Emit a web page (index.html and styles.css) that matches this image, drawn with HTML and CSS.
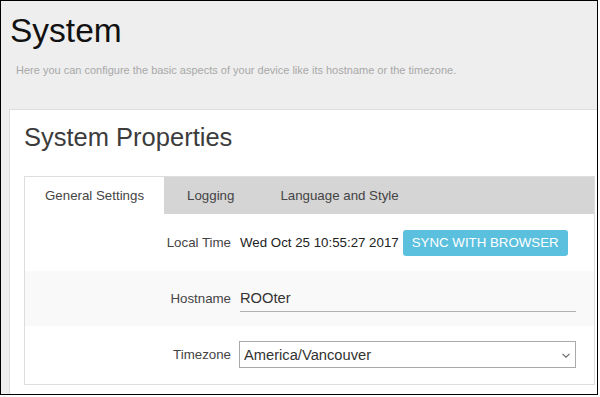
FILE: index.html
```html
<!DOCTYPE html>
<html>
<head>
<meta charset="utf-8">
<link rel="stylesheet" href="styles.css">
</head>
<body>
<div class="frame">
  <header class="page-head">
    <h1 class="page-title">System</h1>
    <p class="page-desc">Here you can configure the basic aspects of your device like its hostname or the timezone.</p>
  </header>
  <section class="card">
    <h2 class="card-title">System Properties</h2>
    <div class="tabbox">
      <div class="tabbar">
        <div class="tab active">General Settings</div>
        <div class="tab">Logging</div>
        <div class="tab">Language and Style</div>
      </div>
      <div class="rows">
        <div class="row">
          <label class="row-label">Local Time</label>
          <div class="row-value">
            <span class="time">Wed Oct 25 10:55:27 2017</span>
            <button class="btn-sync">SYNC WITH BROWSER</button>
          </div>
        </div>
        <div class="row striped">
          <label class="row-label">Hostname</label>
          <div class="row-value">
            <input class="text-input" type="text" value="ROOter">
          </div>
        </div>
        <div class="row last">
          <label class="row-label">Timezone</label>
          <div class="row-value">
            <div class="select-wrap">
              <select class="select"><option>America/Vancouver</option></select>
              <svg class="chev" width="8" height="5" viewBox="0 0 8 5"><path d="M0.5 0.8 L4 4.2 L7.5 0.8" fill="none" stroke="#666" stroke-width="1.1"/></svg>
            </div>
          </div>
        </div>
      </div>
    </div>
  </section>
</div>
</body>
</html>
```

FILE: styles.css
```css
* { box-sizing: border-box; }
html, body { margin: 0; padding: 0; background: #fff; }
body { font-family: "Liberation Sans", Arial, sans-serif; }

.frame {
  width: 598px;
  height: 395px;
  border: 1px solid #000;
  background: #eeeeee;
  overflow: hidden;
}

.page-head { padding: 10px 0 0 9px; }
.page-title {
  margin: 0;
  font-size: 33.5px;
  line-height: 40px;
  font-weight: normal;
  color: #111;
}
.page-desc {
  margin: 13px 0 0 6px;
  font-size: 11px;
  line-height: 13px;
  color: #a8a8a8;
}

.card {
  margin: 32px 0 0 8px;
  width: 601px;
  border: 1px solid #dddddd;
  background: #fff;
  padding: 12px 14px 20px 14px;
}
.card-title {
  margin: 0 0 24px 0;
  font-size: 25.5px;
  line-height: 30px;
  font-weight: normal;
  color: #3c3c3c;
}

.tabbox {
  border: 1px solid #dddddd;
}
.tabbar {
  display: flex;
  background: #d5d5d5;
  height: 37px;
}
.tab {
  padding: 0 23px;
  line-height: 37px;
  font-size: 13.3px;
  color: #444;
}
.tab.active {
  background: #fff;
  padding: 0 20px;
}

.row {
  display: grid;
  grid-template-columns: 215px 1fr;
  align-items: center;
  padding: 15px 0;
  min-height: 57px;
}
.row.striped {
  background: #f9f9f9;
  padding: 14px 0;
  min-height: 55px;
}
.row.last {
  padding: 15px 0 16px;
  min-height: 58px;
}
.row-label {
  text-align: right;
  padding-right: 9px;
  font-size: 13.3px;
  color: #444;
}
.row-value {
  display: flex;
  align-items: center;
}
.time {
  font-size: 13.3px;
  color: #222;
}
.btn-sync {
  margin-left: 4px;
  height: 26px;
  padding: 0 9px;
  border: none;
  border-radius: 3px;
  background: #5bc0de;
  color: #fff;
  font-family: "Liberation Sans", Arial, sans-serif;
  font-size: 13.3px;
  line-height: 26px;
}
.text-input {
  width: 336px;
  height: 26px;
  border: 0;
  border-bottom: 1px solid #b0b0b0;
  background: transparent;
  padding: 0;
  font-family: "Liberation Sans", Arial, sans-serif;
  font-size: 14.7px;
  color: #333;
  outline: none;
}
.select-wrap {
  position: relative;
  margin-left: -1px;
}
.select {
  display: block;
  width: 337px;
  height: 27px;
  border: 1px solid #aaaaaa;
  border-radius: 0;
  background: #fff;
  padding: 0 4px;
  font-family: "Liberation Sans", Arial, sans-serif;
  font-size: 14.7px;
  color: #333;
  appearance: none;
  -webkit-appearance: none;
}
.chev {
  position: absolute;
  right: 6px;
  top: 12px;
}
```
